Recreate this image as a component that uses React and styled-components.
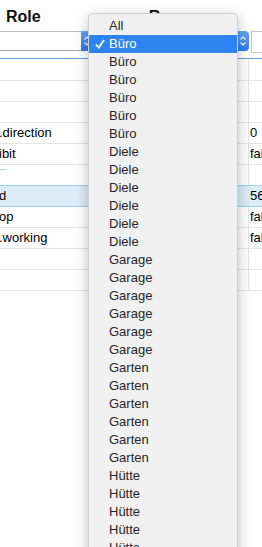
import React from 'react';
import styled, { createGlobalStyle, css } from 'styled-components';

const GlobalStyle = createGlobalStyle`
  html, body {
    margin: 0;
    padding: 0;
    background: #fff;
    overflow: hidden;
  }
  body {
    font-family: "Liberation Sans", Arial, sans-serif;
  }
`;

const cols = '93px 156px 1fr';

const Page = styled.div`
  position: relative;
  width: 262px;
  height: 547px;
  overflow: hidden;
`;

const Table = styled.div`
  width: 330px;
`;

const HeaderRow = styled.div`
  display: grid;
  grid-template-columns: ${cols};
  height: 31px;
  align-items: center;
`;

const HeaderCell = styled.div`
  font-size: 16px;
  font-weight: 700;
  color: #111;
  padding-top: 2px;
  padding-left: ${({ $center }) => ($center ? 0 : 6)}px;
  text-align: ${({ $center }) => ($center ? 'center' : 'left')};
`;

const FilterRow = styled.div`
  display: grid;
  grid-template-columns: ${cols};
  height: 27px;
  border-bottom: 1px solid #5ea2e2;
  align-items: start;
`;

const SelectWrap = styled.div`
  display: flex;
  height: 20px;
  margin-left: ${({ $ml }) => $ml}px;
`;

const Field = styled.div`
  flex: 1;
  background: #fff;
  border: 1px solid #bdbdbd;
  border-right: none;
  border-bottom-color: #a9a9a9;
  border-radius: 3px 0 0 3px;
`;

const Stepper = styled.div`
  width: 12px;
  display: flex;
  align-items: center;
  justify-content: center;
  background: linear-gradient(#68a9f9, #2c78ea);
  border-radius: 0 4px 4px 0;
`;

const TextInput = styled.div`
  height: 22px;
  margin-left: 2px;
  box-sizing: border-box;
  background: #fff;
  border: 1px solid #c8c8c8;
`;

const Rows = styled.div`
  margin-top: 1px;
`;

const Row = styled.div`
  display: grid;
  grid-template-columns: ${cols};
  height: 21px;
  box-sizing: border-box;
  border-bottom: 1px solid #e4e4e4;
  ${({ $selected }) =>
    $selected &&
    css`
      position: relative;
      margin-top: -1px;
      height: 22px;
      border-top: 1px solid #a3d0f1;
      border-bottom-color: #a3d0f1;
      background: #dbedfa;
    `}
`;

const Cell = styled.div`
  font-size: 13px;
  line-height: 20px;
  color: ${({ $tone }) => $tone || '#000'};
  white-space: nowrap;
  overflow: hidden;
  border-right: ${({ $line }) => ($line ? '1px solid #e4e4e4' : 'none')};
  padding-left: ${({ $pl }) => $pl || 0}px;
  text-indent: ${({ $indent }) => $indent || 0}px;
`;

const Menu = styled.div`
  position: absolute;
  left: 88px;
  top: 13px;
  width: 150px;
  height: 580px;
  box-sizing: border-box;
  padding-top: 3px;
  background: #f0f0f0;
  border: 1px solid rgba(0, 0, 0, 0.14);
  border-radius: 5px;
  box-shadow: 0 4px 14px rgba(0, 0, 0, 0.26);
  overflow: hidden;
`;

const MenuItem = styled.div`
  position: relative;
  height: 18px;
  line-height: 18px;
  padding-left: 20px;
  font-size: 13px;
  color: #262626;
  ${({ $active }) =>
    $active &&
    css`
      background: #2e83f3;
      color: #fff;
    `}
`;

const Check = styled.svg`
  position: absolute;
  left: 6px;
  top: 4px;
`;

const rows = [
  { name: '', value: '' },
  { name: '', value: '' },
  { name: '', value: '' },
  { name: '.direction', value: '0' },
  { name: 'ibit', value: 'false' },
  { name: '¯', value: '', tone: '#7fbbe9' },
  { name: 'd', value: '56', selected: true },
  { name: 'op', value: 'false' },
  { name: '.working', value: 'false' },
  { name: '', value: '' },
  { name: '', value: '' },
];

const options = ['All'];
['Büro', 'Diele', 'Garage', 'Garten', 'Hütte'].forEach((room) => {
  for (let i = 0; i < 6; i += 1) options.push(room);
});

const Arrows = () => (
  <svg width="8" height="12" viewBox="0 0 8 12">
    <path d="M1.5 4.5 L4 2 L6.5 4.5 M1.5 7.5 L4 10 L6.5 7.5" fill="none" stroke="#fff" strokeWidth="1.2" />
  </svg>
);

const App = () => {
  return (
    <Page>
      <GlobalStyle />
      <Table>
        <HeaderRow>
          <HeaderCell>Role</HeaderCell>
          <HeaderCell $center>Raum</HeaderCell>
          <HeaderCell />
        </HeaderRow>
        <FilterRow>
          <SelectWrap $ml={-4}>
            <Field />
            <Stepper>
              <Arrows />
            </Stepper>
          </SelectWrap>
          <SelectWrap $ml={4}>
            <Field />
            <Stepper>
              <Arrows />
            </Stepper>
          </SelectWrap>
          <TextInput />
        </FilterRow>
        <Rows>
          {rows.map((r, i) => (
            <Row key={i} $selected={r.selected}>
              <Cell $line $indent={-1} $tone={r.tone}>{r.name}</Cell>
              <Cell $line />
              <Cell $pl={1}>{r.value}</Cell>
            </Row>
          ))}
        </Rows>
      </Table>
      <Menu>
        {options.map((o, i) => (
          <MenuItem key={i} $active={i === 1}>
            {i === 1 && (
              <Check width="10" height="10" viewBox="0 0 10 10">
                <path d="M1 5.5 L3.8 8.5 L9 1" fill="none" stroke="#fff" strokeWidth="1.8" />
              </Check>
            )}
            {o}
          </MenuItem>
        ))}
      </Menu>
    </Page>
  );
};

export default App;
